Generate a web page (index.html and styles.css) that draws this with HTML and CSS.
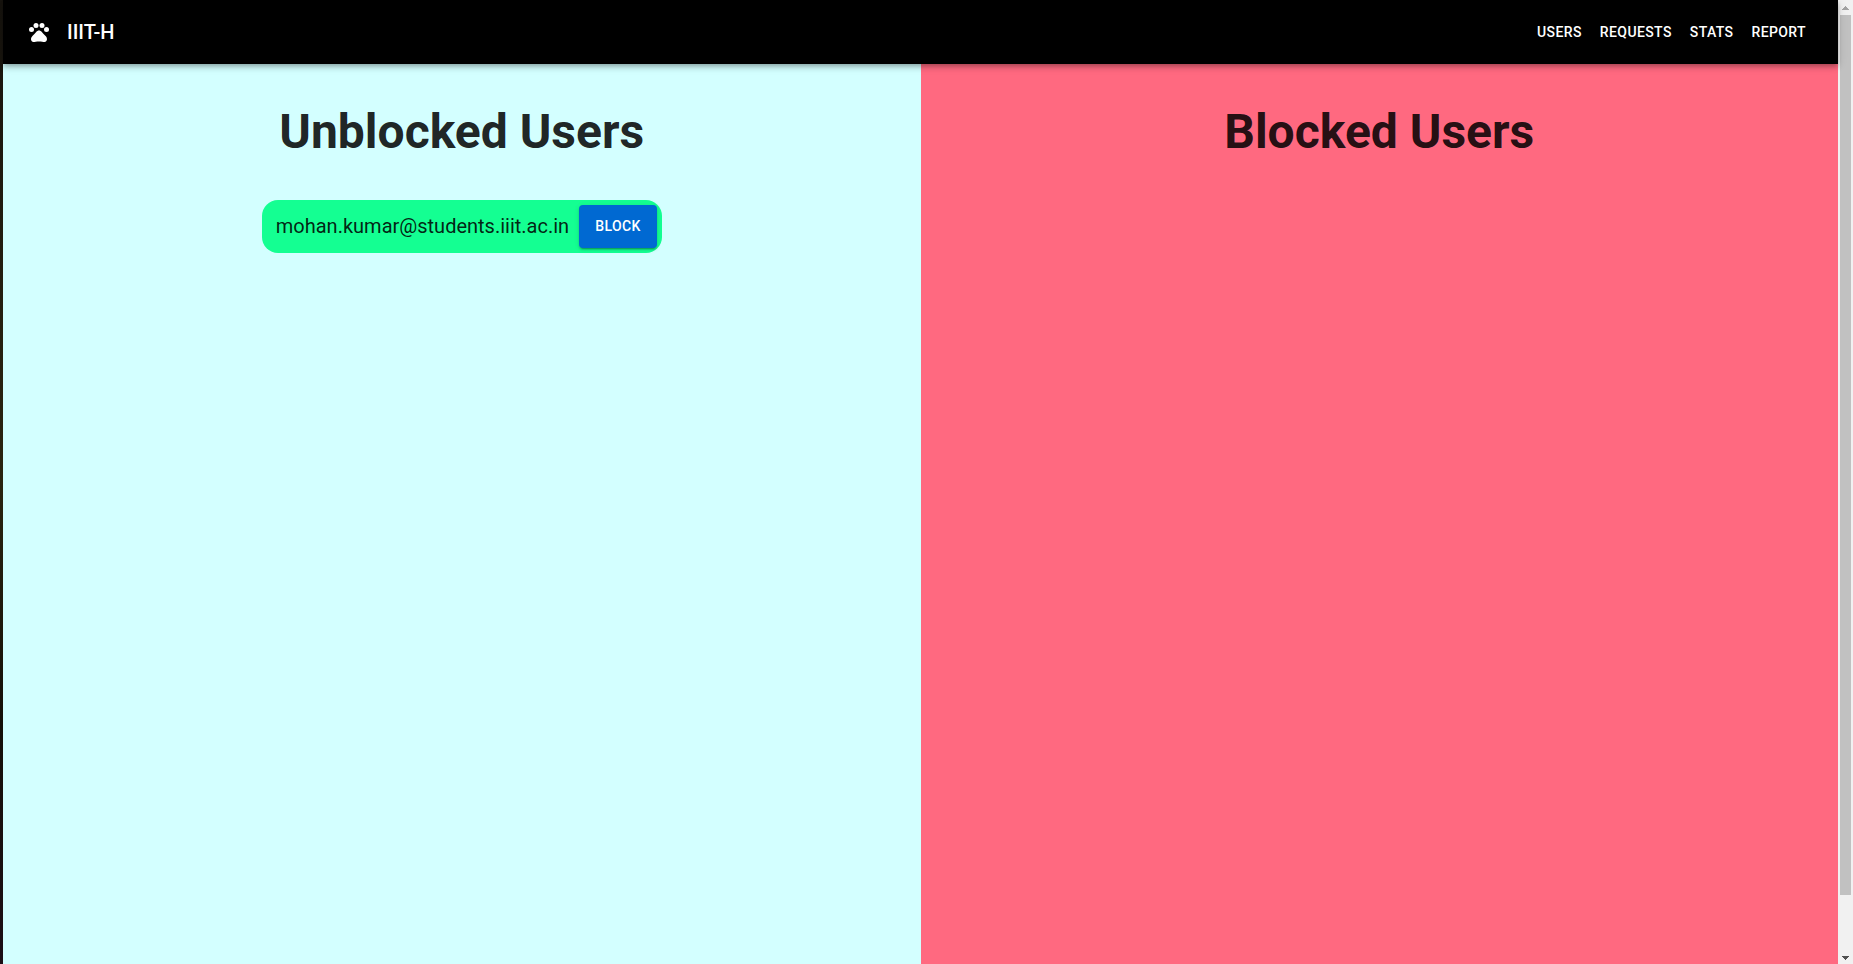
FILE: index.html
```html
<!DOCTYPE html>
<html lang="en">
<head>
<meta charset="utf-8">
<title>IIIT-H</title>
<link rel="stylesheet" href="styles.css">
</head>
<body>
<div class="edge"></div>
<div class="page">
  <header class="bar">
    <button class="logo" type="button" aria-label="Home">
      <svg viewBox="0 0 24 24" width="24" height="24" fill="currentColor" aria-hidden="true"><circle cx="4.5" cy="9.5" r="2.5"/><circle cx="9" cy="5.5" r="2.5"/><circle cx="15" cy="5.5" r="2.5"/><circle cx="19.5" cy="9.5" r="2.5"/><path d="M17.34 14.86c-.87-1.02-1.6-1.89-2.48-2.91-.46-.54-1.05-1.08-1.75-1.32-.11-.04-.22-.07-.33-.09-.25-.04-.52-.04-.78-.04s-.53 0-.79.05c-.11.02-.22.05-.33.09-.7.24-1.28.78-1.75 1.32-.87 1.02-1.6 1.89-2.48 2.91-1.31 1.31-2.92 2.76-2.62 4.79.29 1.02 1.02 2.03 2.33 2.32.73.15 3.06-.44 5.54-.44h.18c2.48 0 4.81.58 5.54.44 1.31-.29 2.04-1.31 2.33-2.32.31-2.04-1.3-3.49-2.61-4.8z"/></svg>
    </button>
    <div class="brand">IIIT-H</div>
    <nav class="nav">
      <button class="nav-item" type="button">USERS</button>
      <button class="nav-item" type="button">REQUESTS</button>
      <button class="nav-item" type="button">STATS</button>
      <button class="nav-item" type="button">REPORT</button>
    </nav>
  </header>
  <main class="panels">
    <section class="panel panel-open">
      <h1 class="title">Unblocked Users</h1>
      <div class="user">
        <span class="email">mohan.kumar@students.iiit.ac.in</span>
        <button class="block" type="button">BLOCK</button>
      </div>
    </section>
    <section class="panel panel-blocked">
      <h1 class="title">Blocked Users</h1>
    </section>
  </main>
</div>
<div class="scroll" aria-hidden="true">
  <svg class="arrow arrow-up" viewBox="0 0 7 4" width="7" height="4"><path d="M3 0h1v1h1v1h1v1h1v1H0V3h1V2h1V1h1z"/></svg>
  <div class="track"><div class="thumb"></div></div>
  <svg class="arrow" viewBox="0 0 7 4" width="7" height="4"><path d="M0 0h7v1H6v1H5v1H4v1H3V3H2V2H1V1H0z"/></svg>
</div>
</body>
</html>
```
FILE: styles.css
```css
* { box-sizing: border-box; }
body {
  margin: 0;
  min-height: 100vh;
  display: flex;
  font-family: Roboto, "Liberation Sans", sans-serif;
  color: rgba(0, 0, 0, 0.87);
}
button { font: inherit; border: 0; margin: 0; cursor: pointer; }
.edge {
  width: 3px;
  flex: none;
  background: linear-gradient(#17140f, #262010 35%, #2a2410 50%, #151009 75%, #1c0f16);
}
.page { flex: 1; min-width: 0; display: flex; flex-direction: column; }
.bar {
  position: relative;
  z-index: 1;
  display: flex;
  align-items: center;
  height: 64px;
  padding: 0 24px;
  background: #000;
  color: #fff;
  box-shadow: 0 2px 4px -1px rgba(0, 0, 0, 0.2), 0 4px 5px rgba(0, 0, 0, 0.14), 0 1px 10px rgba(0, 0, 0, 0.12);
}
.logo {
  display: flex;
  padding: 12px;
  margin-left: -12px;
  margin-right: 4px;
  background: none;
  color: inherit;
}
.brand { flex: 1; font-size: 20px; font-weight: 500; line-height: 32px; }
.nav { display: flex; gap: 2px; }
.nav-item, .block {
  font-size: 14px;
  font-weight: 500;
  line-height: 24px;
  letter-spacing: 0.028em;
  color: #fff;
}
.nav-item { padding: 6px 8px; background: none; }
.panels { flex: 1; display: grid; grid-template-columns: 1fr 1fr; }
.panel {
  display: flex;
  flex-direction: column;
  align-items: center;
  padding-top: 40px;
}
.panel-open { background: #d3ffff; }
.panel-blocked { background: #ff6980; }
.title { margin: 0; font-size: 48px; font-weight: 700; line-height: 56px; }
.user {
  display: flex;
  align-items: center;
  gap: 10px;
  margin-top: 40px;
  padding: 5px 5px 5px 14px;
  border-radius: 16px;
  background: #14ff92;
}
.email { padding-bottom: 2px; font-size: 20px; line-height: 32px; }
.block {
  padding: 9px 16px 10px;
  border-radius: 4px;
  background: #0069d2;
  box-shadow: 0 3px 1px -2px rgba(0, 0, 0, 0.2), 0 2px 2px rgba(0, 0, 0, 0.14), 0 1px 5px rgba(0, 0, 0, 0.12);
}
.scroll {
  flex: none;
  width: 15px;
  display: flex;
  flex-direction: column;
  align-items: center;
  padding: 6px 0 4px;
  background: #f1f1f1;
  fill: #505050;
}
.arrow-up { fill: #a3a3a3; }
.track { flex: 1; width: 11px; margin: 5px 0; }
.thumb { height: 94%; background: #c1c1c1; }
```
